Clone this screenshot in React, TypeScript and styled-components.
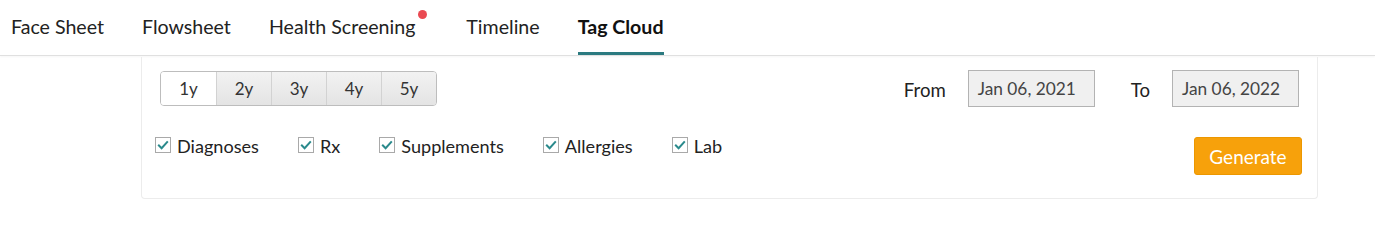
import React, { useState } from "react";
import styled, { createGlobalStyle } from "styled-components";

const GlobalStyle = createGlobalStyle`
  body {
    margin: 0;
    background: #ffffff;
    font-family: Lato, "Open Sans", Arial, sans-serif;
    color: #222;
  }
  * { box-sizing: border-box; }
`;

const TabBar = styled.nav`
  height: 56px;
  display: flex;
  gap: 38px;
  padding-left: 11px;
  border-bottom: 1px solid #e0e0e0;
  box-shadow: 0 1px 2px rgba(0, 0, 0, 0.04);
`;

const Tab = styled.div<{ $active?: boolean }>`
  position: relative;
  height: 55px;
  display: flex;
  align-items: center;
  padding-top: 1px;
  font-size: 19.6px;
  font-weight: ${(p) => (p.$active ? 700 : 400)};
  color: ${(p) => (p.$active ? "#111" : "#222")};
  border-bottom: 3px solid ${(p) => (p.$active ? "#2b7a80" : "transparent")};
  cursor: pointer;
`;

const Dot = styled.span`
  position: absolute;
  top: 10px;
  right: 1px;
  width: 9px;
  height: 9px;
  border-radius: 50%;
  background: #ea4a52;
`;

const DotSpace = styled.span`
  display: inline-block;
  width: 13px;
`;

const Card = styled.section`
  margin: 1px 57px 0 141px;
  border: 1px solid #ececec;
  border-top: none;
  border-radius: 0 0 4px 4px;
  padding: 13px 15px 23px 13px;
  display: flex;
  flex-direction: column;
  gap: 30px;
`;

const Row = styled.div<{ $align?: string }>`
  display: flex;
  justify-content: space-between;
  align-items: ${(p) => p.$align || "center"};
`;

const Segmented = styled.div`
  display: flex;
  margin-left: 5px;
  border: 1px solid #bdbdbd;
  border-radius: 4px;
  overflow: hidden;
`;

const SegButton = styled.button<{ $active?: boolean }>`
  width: 55px;
  height: 33px;
  border: none;
  border-left: 1px solid #d2d2d2;
  font-family: inherit;
  font-size: 17px;
  color: #333;
  cursor: pointer;
  background: ${(p) =>
    p.$active ? "#ffffff" : "linear-gradient(#f2f2f2, #e4e4e4)"};
  &:first-child {
    border-left: none;
  }
`;

const DateGroup = styled.div`
  display: flex;
  align-items: center;
  margin-right: 3px;
`;

const DateLabel = styled.span`
  font-size: 18.6px;
  color: #222;
  margin: 2px 22px 0 0;
`;

const DateBox = styled.div<{ $gap?: number }>`
  width: 127px;
  height: 37px;
  display: flex;
  align-items: center;
  padding-left: 9px;
  background: #f0f0f0;
  border: 1px solid #b3b3b3;
  font-size: 17.3px;
  color: #444;
  margin-right: ${(p) => p.$gap || 0}px;
`;

const Checks = styled.div`
  display: flex;
  gap: 39px;
  margin-top: -2px;
`;

const CheckItem = styled.label`
  display: flex;
  align-items: center;
  gap: 6px;
  font-size: 18.1px;
  color: #222;
  cursor: pointer;
`;

const Box = styled.span`
  width: 16px;
  height: 16px;
  border: 1px solid #a9a9a9;
  background: #fff;
  display: flex;
  align-items: center;
  justify-content: center;
  margin-top: -2px;
`;

const GenerateButton = styled.button`
  width: 108px;
  height: 38px;
  border: 1px solid #ec9700;
  border-radius: 3px;
  background: #f7a10b;
  color: #fff;
  font-family: inherit;
  font-size: 19px;
  cursor: pointer;
`;

const tabs = ["Face Sheet", "Flowsheet", "Health Screening", "Timeline", "Tag Cloud"];
const ranges = ["1y", "2y", "3y", "4y", "5y"];
const filters = ["Diagnoses", "Rx", "Supplements", "Allergies", "Lab"];

const Check = () => (
  <svg width="12" height="10" viewBox="0 0 12 10">
    <path d="M1.2 4.8 L4.6 8.2 L10.8 1.4" fill="none" stroke="#2a8a8c" strokeWidth="2" />
  </svg>
);

export default function App() {
  const [range, setRange] = useState("1y");
  return (
    <>
      <GlobalStyle />
      <TabBar>
        {tabs.map((t) => (
          <Tab key={t} $active={t === "Tag Cloud"}>
            {t}
            {t === "Health Screening" && (
              <>
                <DotSpace />
                <Dot />
              </>
            )}
          </Tab>
        ))}
      </TabBar>
      <Card>
        <Row>
          <Segmented>
            {ranges.map((r) => (
              <SegButton key={r} $active={r === range} onClick={() => setRange(r)}>
                {r}
              </SegButton>
            ))}
          </Segmented>
          <DateGroup>
            <DateLabel>From</DateLabel>
            <DateBox $gap={36}>Jan 06, 2021</DateBox>
            <DateLabel>To</DateLabel>
            <DateBox>Jan 06, 2022</DateBox>
          </DateGroup>
        </Row>
        <Row $align="flex-start">
          <Checks>
            {filters.map((f) => (
              <CheckItem key={f}>
                <Box>
                  <Check />
                </Box>
                {f}
              </CheckItem>
            ))}
          </Checks>
          <GenerateButton>Generate</GenerateButton>
        </Row>
      </Card>
    </>
  );
}
